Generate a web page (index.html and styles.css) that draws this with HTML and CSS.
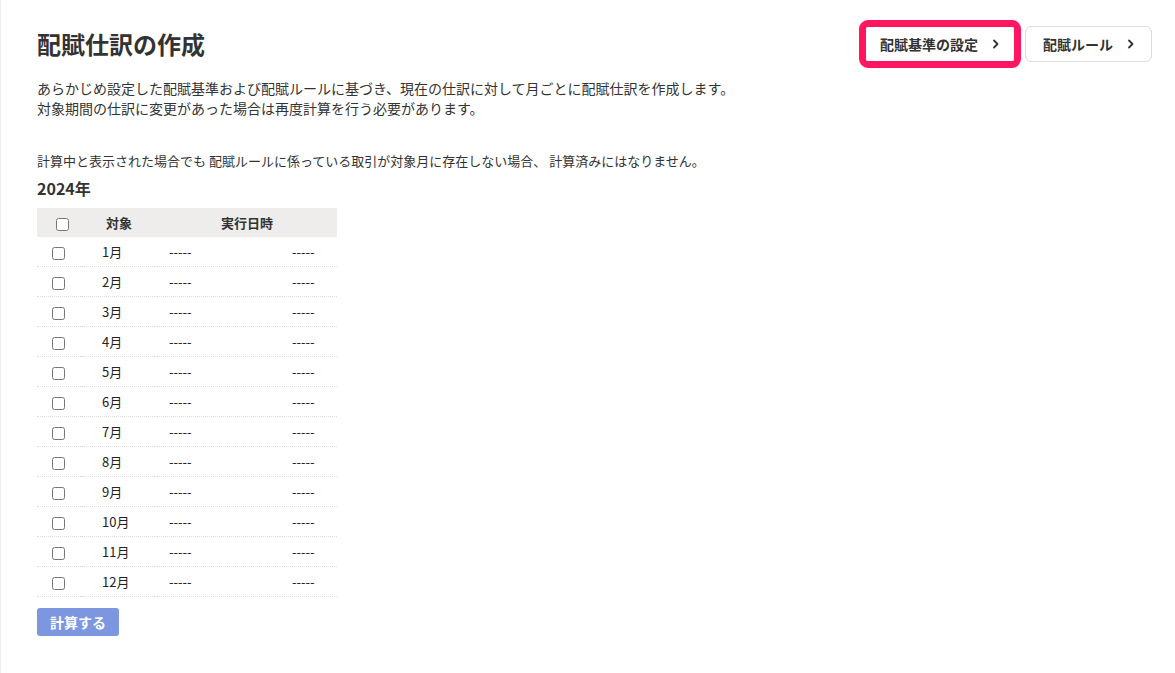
FILE: index.html
```html
<!DOCTYPE html>
<html lang="ja">
<head>
    <meta charset="UTF-8">
    <title>配賦仕訳の作成</title>
    <link rel="stylesheet" href="styles.css">
</head>
<body>
    <div class="page">
        <div class="page-header">
            <h1>配賦仕訳の作成</h1>
            <div class="actions">
                <div class="highlight">
                    <button class="link-btn link-btn--bare">配賦基準の設定
                        <svg class="chevron" width="8" height="12" viewBox="0 0 8 12"><path d="M2 2.5l3.5 3.5L2 9.5" fill="none" stroke="#333" stroke-width="1.8" stroke-linecap="round" stroke-linejoin="round"/></svg>
                    </button>
                </div>
                <button class="link-btn">配賦ルール
                    <svg class="chevron" width="8" height="12" viewBox="0 0 8 12"><path d="M2 2.5l3.5 3.5L2 9.5" fill="none" stroke="#333" stroke-width="1.8" stroke-linecap="round" stroke-linejoin="round"/></svg>
                </button>
            </div>
        </div>

        <p class="desc">
            あらかじめ設定した配賦基準および配賦ルールに基づき、現在の仕訳に対して月ごとに配賦仕訳を作成します。<br>
            対象期間の仕訳に変更があった場合は再度計算を行う必要があります。
        </p>
        <p class="note">計算中と表示された場合でも 配賦ルールに係っている取引が対象月に存在しない場合、 計算済みにはなりません。</p>

        <h2 class="year">2024年</h2>
        <table class="month-table">
            <colgroup>
                <col class="col-check">
                <col class="col-month">
                <col class="col-date">
                <col class="col-status">
            </colgroup>
            <thead>
                <tr>
                    <th class="th-check"><input type="checkbox"></th>
                    <th>対象</th>
                    <th colspan="2">実行日時</th>
                </tr>
            </thead>
            <tbody id="month-rows"></tbody>
        </table>

        <button class="calc-btn">計算する</button>
    </div>

    <script>
    // 12ヶ月分の行を作る
    const rows = document.getElementById('month-rows');
    for (let m = 1; m <= 12; m++) {
        const tr = document.createElement('tr');
        tr.innerHTML = `
            <td class="td-check"><input type="checkbox"></td>
            <td class="td-month">${m}月</td>
            <td class="td-date">-----</td>
            <td class="td-status">-----</td>
        `;
        rows.appendChild(tr);
    }
    </script>
</body>
</html>
```

FILE: styles.css
```css
body {
    margin: 0;
    font-family: 'Noto Sans CJK JP', 'Liberation Sans', sans-serif;
    color: #333;
    background: #fff;
}
.page {
    min-height: 100vh;
    box-sizing: border-box;
    border-left: 1px solid #eee;
    padding: 20px 23px 0 36px;
}
.page-header {
    display: flex;
    justify-content: space-between;
    align-items: center;
}
h1 {
    margin: 0;
    font-size: 24px;
    line-height: 1;
    font-weight: 700;
    color: #333;
}
.actions {
    display: flex;
    align-items: center;
    gap: 4px;
}
.highlight {
    border: 7px solid #ff1560;
    border-radius: 9px;
    background: #fff;
}
.link-btn {
    display: flex;
    align-items: center;
    gap: 14px;
    height: 36px;
    padding: 0 16px 0 17px;
    background: #fff;
    border: 1px solid #ddd;
    border-radius: 6px;
    font-family: inherit;
    font-size: 14px;
    font-weight: 700;
    color: #333;
    cursor: pointer;
}
.link-btn--bare {
    height: 34px;
    padding: 0 14px;
    border: none;
    border-radius: 2px;
}
.chevron {
    display: block;
}
.desc {
    margin: 10px 0 0;
    font-size: 14px;
    line-height: 20px;
}
.note {
    margin: 33px 0 0;
    font-size: 13px;
    line-height: 20px;
}
.year {
    margin: 5px 0 0;
    font-size: 16px;
    line-height: 24px;
    font-weight: 700;
}
.month-table {
    margin-top: 8px;
    width: 300px;
    border-collapse: collapse;
    table-layout: fixed;
    font-size: 13px;
}
.col-check { width: 44px; }
.col-month { width: 76px; }
.col-date { width: 123px; }
.col-status { width: 57px; }
.month-table th {
    background: #eeedeb;
    height: 29px;
    padding: 0;
    font-weight: 700;
    text-align: center;
    color: #333;
}
.month-table th.th-check {
    padding-left: 6px;
}
.month-table td {
    height: 29px;
    padding: 0;
    border-bottom: 1px dotted #ddd;
    color: #222;
}
.month-table input[type="checkbox"] {
    width: 13px;
    height: 13px;
    margin: 0;
    vertical-align: middle;
}
.td-check {
    text-align: center;
    padding-right: 2px !important;
}
.td-month {
    padding-left: 21px !important;
}
.td-date,
.td-status {
    padding-left: 12px !important;
}
.calc-btn {
    margin-top: 11px;
    height: 28px;
    padding: 0 13px;
    background: #7c97e0;
    color: #fff;
    border: none;
    border-radius: 3px;
    font-family: inherit;
    font-size: 14px;
    font-weight: 700;
    cursor: pointer;
}
```
